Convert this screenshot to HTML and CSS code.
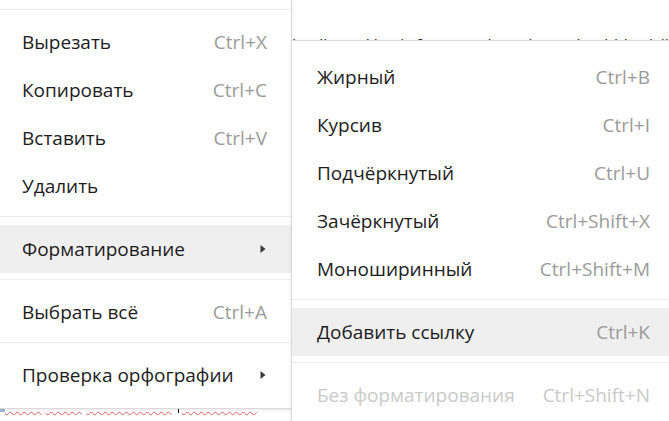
FILE: index.html
```html
<!DOCTYPE html>
<html lang="ru">
<head>
<meta charset="utf-8">
<title>Контекстное меню</title>
<link rel="stylesheet" href="styles.css">
</head>
<body>
<div class="doc">
  <p class="doc-line doc-top">i. edit, and basic formatted text is used to hide visible text</p>
  <p class="doc-line doc-bottom"><span class="sel"></span><span class="typo">tekst</span> <span class="typo">wrds</span> <span class="typo">mistakenlie</span> <span class="caret"></span><span class="typo">sentenses</span></p>
</div>

<div class="menu menu-main">
  <div class="item hidden-item"><span class="label">Повторить</span><span class="key">Ctrl+Y</span></div>
  <div class="sep"></div>
  <div class="item"><span class="label">Вырезать</span><span class="key">Ctrl+X</span></div>
  <div class="item"><span class="label">Копировать</span><span class="key">Ctrl+C</span></div>
  <div class="item"><span class="label">Вставить</span><span class="key">Ctrl+V</span></div>
  <div class="item"><span class="label">Удалить</span></div>
  <div class="sep"></div>
  <div class="item active"><span class="label">Форматирование</span><svg class="arrow" width="6" height="10" viewBox="0 0 6 10"><path d="M0.5 1 L5.5 5 L0.5 9 Z" fill="#3a3a3a"/></svg></div>
  <div class="sep"></div>
  <div class="item"><span class="label">Выбрать всё</span><span class="key">Ctrl+A</span></div>
  <div class="sep"></div>
  <div class="item"><span class="label">Проверка орфографии</span><svg class="arrow" width="6" height="10" viewBox="0 0 6 10"><path d="M0.5 1 L5.5 5 L0.5 9 Z" fill="#3a3a3a"/></svg></div>
</div>

<div class="menu menu-sub">
  <div class="item"><span class="label">Жирный</span><span class="key">Ctrl+B</span></div>
  <div class="item"><span class="label">Курсив</span><span class="key">Ctrl+I</span></div>
  <div class="item"><span class="label">Подчёркнутый</span><span class="key">Ctrl+U</span></div>
  <div class="item"><span class="label">Зачёркнутый</span><span class="key">Ctrl+Shift+X</span></div>
  <div class="item"><span class="label">Моноширинный</span><span class="key">Ctrl+Shift+M</span></div>
  <div class="sep"></div>
  <div class="item active"><span class="label">Добавить ссылку</span><span class="key">Ctrl+K</span></div>
  <div class="sep"></div>
  <div class="item disabled"><span class="label">Без форматирования</span><span class="key">Ctrl+Shift+N</span></div>
</div>
</body>
</html>
```
FILE: styles.css
```css
html, body {
  margin: 0;
  padding: 0;
  width: 669px;
  height: 421px;
  overflow: hidden;
  background: #ffffff;
  font-family: "Open Sans", "Noto Sans", sans-serif;
}

.doc {
  padding: 34px 0 0 0;
  color: #222222;
  font-size: 16px;
  line-height: 22px;
}

.doc-line {
  margin: 0;
  white-space: nowrap;
}

.doc-top {
  padding-left: 292px;
}

.doc-bottom {
  margin-top: 335px;
  color: #222222;
}

.typo {
  text-decoration: underline wavy #e0605a;
  text-decoration-thickness: 1px;
  text-underline-offset: 3px;
}

.sel {
  display: inline-block;
  width: 5px;
  height: 4px;
  background: #9fb8d8;
  vertical-align: -4px;
}

.caret {
  display: inline-block;
  width: 1px;
  height: 18px;
  background: #111111;
  vertical-align: -5px;
  margin: 0 3px 0 2px;
}

.menu {
  position: absolute;
  background: #ffffff;
  border: 1px solid #dadada;
  box-shadow: 0 1px 3px rgba(0, 0, 0, 0.10);
  font-size: 19px;
  color: #1c1c1c;
}

.menu-main {
  left: -1px;
  top: -54px;
  width: 291px;
  padding: 8px 0 9px;
}

.menu-sub {
  left: 291px;
  top: 40px;
  width: 385px;
  padding: 12px 0 8px;
}

.item {
  display: flex;
  align-items: center;
  justify-content: space-between;
  height: 48px;
  padding: 0 24px 0 22px;
  white-space: nowrap;
}

.menu-sub .item {
  padding: 0 27px 0 25px;
}

.item.active {
  background: #efefef;
}

.key {
  color: #9b9b9b;
}

.item.disabled .label,
.item.disabled .key {
  color: #c9c9c9;
}

.arrow {
  display: block;
  margin-right: 1px;
}

.sep {
  height: 1px;
  background: #ececec;
  margin: 6px 0 8px;
}
```
